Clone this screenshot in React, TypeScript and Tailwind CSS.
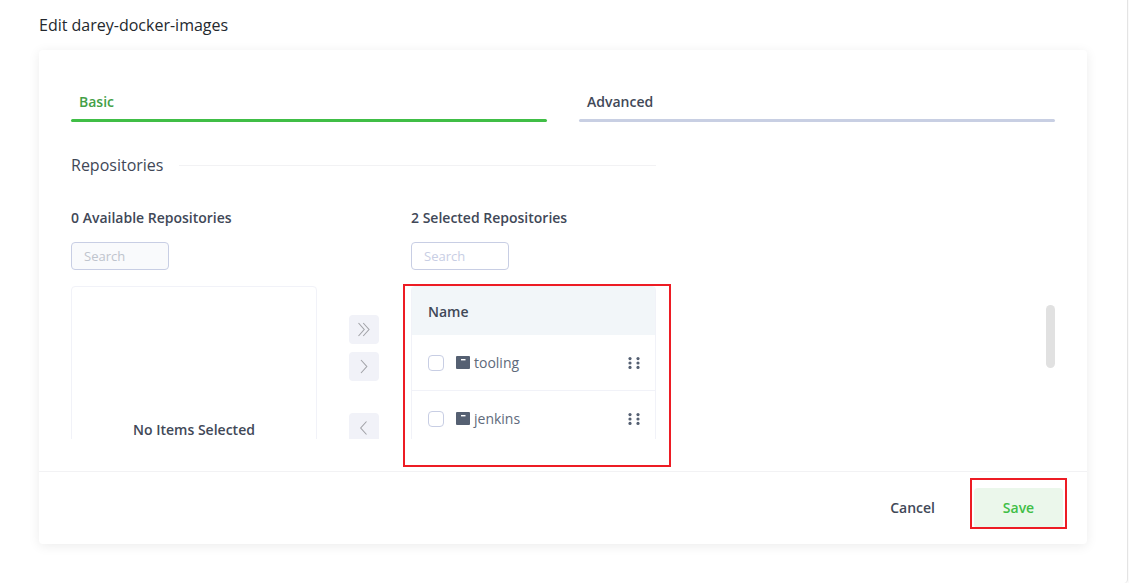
import { useState } from "react";
import type { ReactNode } from "react";

const tabs = ["Basic", "Advanced"];
const selectedRepositories = ["tooling", "jenkins"];

function RepositoryIcon() {
  return (
    <svg viewBox="0 0 14 13" className="h-[13px] w-[14px] shrink-0" aria-hidden="true">
      <rect width="14" height="13" rx="1" fill="#556072" />
      <rect x="5" y="3" width="4.5" height="1.4" fill="#fff" />
    </svg>
  );
}

function DragIcon() {
  return (
    <svg viewBox="0 0 12 12" className="h-3 w-3" fill="#556072" aria-hidden="true">
      {[1.6, 6, 10.4].map((y) => (
        <g key={y}>
          <circle cx="2" cy={y} r="1.6" />
          <circle cx="10" cy={y} r="1.6" />
        </g>
      ))}
    </svg>
  );
}

function MoveButton({ label, children }: { label: string; children: ReactNode }) {
  return (
    <button
      type="button"
      aria-label={label}
      className="flex h-[29px] w-[30px] items-center justify-center rounded bg-[#f1f2f8]"
    >
      <svg
        viewBox="0 0 16 16"
        className="h-4 w-4"
        fill="none"
        stroke="#a2a3a8"
        strokeWidth="1.1"
        aria-hidden="true"
      >
        {children}
      </svg>
    </button>
  );
}

function Tabs() {
  const [active, setActive] = useState("Basic");
  return (
    <div role="tablist" className="grid grid-cols-2 gap-8">
      {tabs.map((tab) => (
        <button
          key={tab}
          type="button"
          role="tab"
          aria-selected={active === tab}
          onClick={() => setActive(tab)}
          className={
            active === tab
              ? "px-2 pt-1.5 text-left font-semibold text-[#43a047]"
              : "px-2 pt-1.5 text-left font-semibold text-[#414857]"
          }
        >
          <span className="block pb-[7px]">{tab}</span>
          <span
            className={
              active === tab
                ? "-mx-2 block h-[3px] rounded-sm bg-[#40be46]"
                : "-mx-2 block h-[3px] rounded-sm bg-[#c8cfe3]"
            }
          />
        </button>
      ))}
    </div>
  );
}

function AvailableList() {
  return (
    <section className="w-[246px]">
      <h3 className="font-semibold">0 Available Repositories</h3>
      <input
        type="search"
        aria-label="Search available repositories"
        placeholder="Search"
        disabled
        className="mt-3.5 block h-7 w-[98px] rounded border border-[#c8cee4] bg-[#f9fafc] px-3 text-[13px] placeholder:text-[#bfc4cd]"
      />
      <div className="mt-4 flex h-72 items-center justify-center rounded border border-[#f1f2f8] font-semibold">
        No Items Selected
      </div>
    </section>
  );
}

function SelectedList() {
  return (
    <section className="w-[245px]">
      <h3 className="font-semibold">2 Selected Repositories</h3>
      <input
        type="search"
        aria-label="Search selected repositories"
        placeholder="Search"
        className="mt-3.5 block h-7 w-[98px] rounded border border-[#c8cee4] bg-white px-3 text-[13px] placeholder:text-[#c8cee4]"
      />
      <div className="mt-4 h-72 overflow-hidden rounded border border-[#f1f2f8]">
        <table className="w-full border-separate border-spacing-0">
          <thead>
            <tr className="h-12 bg-[#f2f6f9]">
              <th colSpan={2} className="px-4 pt-0.5 text-left font-semibold">
                Name
              </th>
            </tr>
          </thead>
          <tbody>
            {selectedRepositories.map((name) => (
              <tr key={name} className="h-14">
                <td className="border-b border-[#f1f2f8] pl-4">
                  <label className="flex items-center text-[#606a7b]">
                    <input
                      type="checkbox"
                      className="mr-3 h-4 w-4 appearance-none rounded border border-[#c8cee4] bg-white checked:bg-[#40be46]"
                    />
                    <RepositoryIcon />
                    <span className="ml-1">{name}</span>
                  </label>
                </td>
                <td className="border-b border-[#f1f2f8] pr-[15px]">
                  <button type="button" aria-label={`Reorder ${name}`} className="ml-auto block">
                    <DragIcon />
                  </button>
                </td>
              </tr>
            ))}
          </tbody>
        </table>
      </div>
    </section>
  );
}

export default function App() {
  return (
    <div className="min-h-screen bg-[#fafafa] pr-px font-['Open_Sans',sans-serif] text-sm text-[#414857]">
      <main className="min-h-screen rounded-br border-r border-[#e4e4e4] bg-white pt-[13px] pr-10 pb-[39px] pl-[39px]">
        <h1 className="text-base text-[#24292e]">Edit darey-docker-images</h1>

        <form
          onSubmit={(event) => event.preventDefault()}
          className="relative mt-[13px] rounded bg-white shadow-[0_2px_12px_rgba(0,0,0,0.08)]"
        >
          <div className="px-8 pt-9 pb-8">
            <Tabs />
            <div className="relative h-[317px] overflow-hidden">
              <div className="w-[585px] pt-[31px]">
                <div className="flex items-center gap-4">
                  <h2 className="text-base">Repositories</h2>
                  <div className="h-px flex-1 bg-[#f2f2f4]" />
                </div>
                <div className="mt-[31px] flex justify-between">
                  <AvailableList />
                  <div className="flex flex-col gap-2 pt-[107px]">
                    <MoveButton label="Select all">
                      <path d="M2.5 1 8.2 7.5 2.5 14M7.2 1l5.8 6.5L7.2 14" />
                    </MoveButton>
                    <MoveButton label="Select">
                      <path d="M5 1l5.8 6.5L5 14" />
                    </MoveButton>
                    <div className="mt-6">
                      <MoveButton label="Remove">
                        <path d="M10.5 1.5 4.7 8l5.8 6.5" />
                      </MoveButton>
                    </div>
                  </div>
                  <SelectedList />
                </div>
              </div>
              <div className="absolute top-[183px] right-0 h-[63px] w-[9px] rounded-full bg-[#e1e1e1]" />
            </div>
          </div>

          <div className="pointer-events-none absolute top-[234px] left-[364px] h-[183px] w-[268px] border-2 border-[#ed1c24]" />

          <footer className="flex items-center justify-end border-t border-[#f2f2f4] px-6 py-4">
            <button type="button" className="h-10 px-[39px] font-semibold">
              Cancel
            </button>
            <div className="relative">
              <button
                type="submit"
                className="block h-10 w-[89px] rounded bg-[#ebf7eb] font-semibold text-[#40be46]"
              >
                Save
              </button>
              <div className="pointer-events-none absolute -top-2.5 -right-1 -bottom-px -left-1 border-2 border-[#ed1c24]" />
            </div>
          </footer>
        </form>
      </main>
    </div>
  );
}
